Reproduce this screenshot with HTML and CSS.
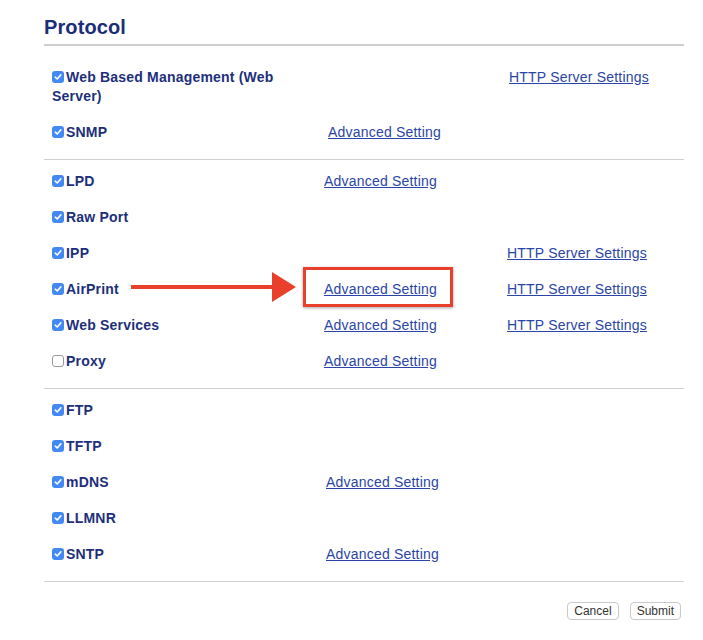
FILE: index.html
```html
<!DOCTYPE html>
<html lang="en">
<head>
  <meta charset="UTF-8" />
  <meta name="viewport" content="width=device-width, initial-scale=1.0" />
  <title>Protocol</title>
  <link rel="stylesheet" href="styles.css">
</head>
<body>
  <div class="page">
    <h2>Protocol</h2>

    <div class="section sec-a">
      <div class="row">
        <label class="item wrap"><span class="cb on"></span>Web Based Management (Web Server)</label>
        <span></span>
        <a href="#">HTTP Server Settings</a>
      </div>
      <div class="row">
        <label class="item"><span class="cb on"></span>SNMP</label>
        <a href="#">Advanced Setting</a>
      </div>
    </div>

    <div class="section sec-b">
      <div class="row">
        <label class="item"><span class="cb on"></span>LPD</label>
        <a href="#">Advanced Setting</a>
      </div>
      <div class="row">
        <label class="item"><span class="cb on"></span>Raw Port</label>
      </div>
      <div class="row">
        <label class="item"><span class="cb on"></span>IPP</label>
        <span></span>
        <a href="#">HTTP Server Settings</a>
      </div>
      <div class="row">
        <label class="item"><span class="cb on"></span>AirPrint</label>
        <a href="#">Advanced Setting</a>
        <a href="#">HTTP Server Settings</a>
      </div>
      <div class="row">
        <label class="item"><span class="cb on"></span>Web Services</label>
        <a href="#">Advanced Setting</a>
        <a href="#">HTTP Server Settings</a>
      </div>
      <div class="row">
        <label class="item"><span class="cb"></span>Proxy</label>
        <a href="#">Advanced Setting</a>
      </div>
    </div>

    <div class="section sec-c">
      <div class="row">
        <label class="item"><span class="cb on"></span>FTP</label>
      </div>
      <div class="row">
        <label class="item"><span class="cb on"></span>TFTP</label>
      </div>
      <div class="row">
        <label class="item"><span class="cb on"></span>mDNS</label>
        <a href="#">Advanced Setting</a>
      </div>
      <div class="row">
        <label class="item"><span class="cb on"></span>LLMNR</label>
      </div>
      <div class="row">
        <label class="item"><span class="cb on"></span>SNTP</label>
        <a href="#">Advanced Setting</a>
      </div>
    </div>

    <div class="actions">
      <button type="button">Cancel</button>
      <button type="button">Submit</button>
    </div>

    <!-- annotation overlay -->
    <svg class="arrow" width="165" height="30" viewBox="0 0 165 30">
      <rect x="0" y="13" width="143" height="4" fill="#e8402a" />
      <polygon points="141,0 165,15 141,30" fill="#e8402a" />
    </svg>
    <div class="highlight"></div>
  </div>
</body>
</html>
```

FILE: styles.css
```css
body {
  margin: 0;
  padding: 15px 19px 0 44px;
  font-family: "Liberation Sans", Arial, sans-serif;
  background-color: #fff;
  color: #1d2f7b;
}
.page {
  position: relative;
  width: 640px;
}
h2 {
  margin: 0;
  font-size: 20px;
  line-height: 24px;
  padding-bottom: 5px;
  border-bottom: 2px solid #cfcfcf;
  color: #1c2e78;
  letter-spacing: 0.1px;
}
.section {
  padding: 3px 0 9px 8px;
  border-bottom: 1px solid #d0d0d0;
}
.sec-a {
  padding-top: 13px;
  --cols: 276px 181px 1fr;
}
.sec-b {
  --cols: 272px 183px 1fr;
}
.sec-c {
  --cols: 274px 1fr;
}
.row {
  display: grid;
  grid-template-columns: var(--cols);
  align-items: start;
  padding: 8.5px 0;
  font-size: 14px;
  line-height: 19px;
  letter-spacing: 0.2px;
}
.item {
  font-weight: bold;
  color: #1d2f7b;
}
.item.wrap {
  max-width: 240px;
}
.cb {
  display: inline-block;
  width: 12px;
  height: 12px;
  margin-right: 2px;
  vertical-align: -1px;
  box-sizing: border-box;
  border: 1px solid #9a9a9a;
  border-radius: 3px;
  background: #fff;
}
.cb.on {
  border: none;
  background: #4389f4 url("data:image/svg+xml,%3Csvg xmlns='http://www.w3.org/2000/svg' viewBox='0 0 12 12'%3E%3Cpath d='M3.3 6.2 5.2 8 8.8 3.9' fill='none' stroke='white' stroke-width='1.6' stroke-linecap='round' stroke-linejoin='round'/%3E%3C/svg%3E") no-repeat center / 12px 12px;
}
a {
  color: #2a45a6;
  text-decoration: underline;
  justify-self: start;
}
.actions {
  display: flex;
  justify-content: flex-end;
  gap: 11px;
  margin-top: 20px;
  padding-right: 3px;
}
button {
  font-family: "Liberation Sans", Arial, sans-serif;
  font-size: 12px;
  height: 18px;
  line-height: 16px;
  padding: 0 6px;
  background-color: #fff;
  color: #333;
  border: 1px solid #c9c9c9;
  border-radius: 4px;
}
.arrow {
  position: absolute;
  left: 87px;
  top: 257px;
}
.highlight {
  position: absolute;
  left: 259px;
  top: 252px;
  width: 150px;
  height: 40px;
  box-sizing: border-box;
  border: 3px solid #e8402a;
  box-shadow: 0 1px 3px rgba(0, 0, 0, 0.35);
}
```
